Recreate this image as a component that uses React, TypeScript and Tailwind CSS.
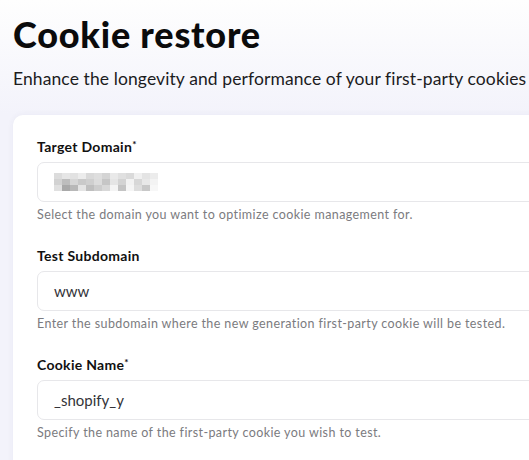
import React from 'react';

// Pixelated blur that hides the real domain name
const MaskedDomain: React.FC = () => {
  const cells: { x: number; y: number; c: string }[] = [
    { x: 0, y: 0, c: '#dcdcdc' }, { x: 8, y: 0, c: '#e6e6e6' }, { x: 16, y: 0, c: '#e2e2e2' },
    { x: 24, y: 0, c: '#ececec' }, { x: 32, y: 0, c: '#d9d9d9' }, { x: 40, y: 0, c: '#dedede' },
    { x: 48, y: 0, c: '#d4d4d4' }, { x: 56, y: 0, c: '#e9e9e9' }, { x: 64, y: 0, c: '#e0e0e0' },
    { x: 72, y: 0, c: '#dadada' }, { x: 80, y: 0, c: '#f0f0f0' }, { x: 88, y: 0, c: '#e4e4e4' },
    { x: 96, y: 0, c: '#ececec' },
    { x: 0, y: 6, c: '#d2d2d2' }, { x: 8, y: 6, c: '#bdbdbd' }, { x: 16, y: 6, c: '#d6d6d6' },
    { x: 24, y: 6, c: '#c9c9c9' }, { x: 32, y: 6, c: '#cfcfcf' }, { x: 40, y: 6, c: '#dcdcdc' },
    { x: 48, y: 6, c: '#c6c6c6' }, { x: 56, y: 6, c: '#e5e5e5' }, { x: 64, y: 6, c: '#d3d3d3' },
    { x: 72, y: 6, c: '#f2f2f2' }, { x: 80, y: 6, c: '#d7d7d7' }, { x: 88, y: 6, c: '#e8e8e8' },
    { x: 96, y: 6, c: '#f3f3f3' },
    { x: 0, y: 12, c: '#e0e0e0' }, { x: 8, y: 12, c: '#a9a9a9' }, { x: 16, y: 12, c: '#b8b8b8' },
    { x: 24, y: 12, c: '#e4e4e4' }, { x: 32, y: 12, c: '#bfbfbf' }, { x: 40, y: 12, c: '#cdcdcd' },
    { x: 48, y: 12, c: '#d8d8d8' }, { x: 56, y: 12, c: '#f4f4f4' }, { x: 64, y: 12, c: '#c4c4c4' },
    { x: 72, y: 12, c: '#f5f5f5' }, { x: 80, y: 12, c: '#dddddd' }, { x: 88, y: 12, c: '#c8c8c8' },
    { x: 96, y: 12, c: '#f7f7f7' },
  ];
  return (
    <svg width="104" height="18" viewBox="0 0 104 18" className="block">
      {cells.map((cell, i) => (
        <rect key={i} x={cell.x} y={cell.y} width="8" height="6" fill={cell.c} />
      ))}
    </svg>
  );
};

interface FieldProps {
  label: string;
  required?: boolean;
  hint: string;
  children: React.ReactNode;
}

const Field: React.FC<FieldProps> = ({ label, required, hint, children }) => (
  <div className="flex flex-col">
    <label className="text-[14px] leading-[20px] font-bold tracking-[0.3px] text-[#111111]">
      {label}
      {required && <span className="align-top text-[10px] leading-[14px]">*</span>}
    </label>
    <div className="mt-[5px] flex h-[40px] items-center rounded-[7px] border border-[#e7e7ea] bg-white pl-4">
      {children}
    </div>
    <p className="mt-[5px] whitespace-nowrap text-[12.5px] leading-[16px] tracking-[0.4px] text-[#7b7b80]">
      {hint}
    </p>
  </div>
);

export default function App() {
  return (
    <div className="h-[460px] w-full overflow-hidden bg-[#f3f3fb] font-['Lato',sans-serif]">
      <div className="bg-gradient-to-b from-[#fefefe] to-[#f3f3fb] px-[13px] pt-[12px] pb-[24px]">
        <h1 className="text-[36px] leading-[44px] font-black tracking-[0.8px] text-[#0b0b0c]">
          Cookie restore
        </h1>
        <p className="mt-[11px] whitespace-nowrap text-[17.5px] leading-[24px] tracking-[0.1px] text-[#1c1c1e]">
          Enhance the longevity and performance of your first-party cookies
        </p>
      </div>

      <div className="ml-[13px] w-[640px] rounded-tl-[10px] bg-white px-6 pt-[22px] pb-8 shadow-[0_0_6px_rgba(60,60,120,0.06)]">
        <div className="flex flex-col gap-[23px]">
          <Field
            label="Target Domain"
            required
            hint="Select the domain you want to optimize cookie management for."
          >
            <MaskedDomain />
          </Field>

          <Field
            label="Test Subdomain"
            hint="Enter the subdomain where the new generation first-party cookie will be tested."
          >
            <span className="text-[15px] text-[#333338]">www</span>
          </Field>

          <Field
            label="Cookie Name"
            required
            hint="Specify the name of the first-party cookie you wish to test."
          >
            <span className="text-[15px] text-[#333338]">_shopify_y</span>
          </Field>
        </div>
      </div>
    </div>
  );
}
